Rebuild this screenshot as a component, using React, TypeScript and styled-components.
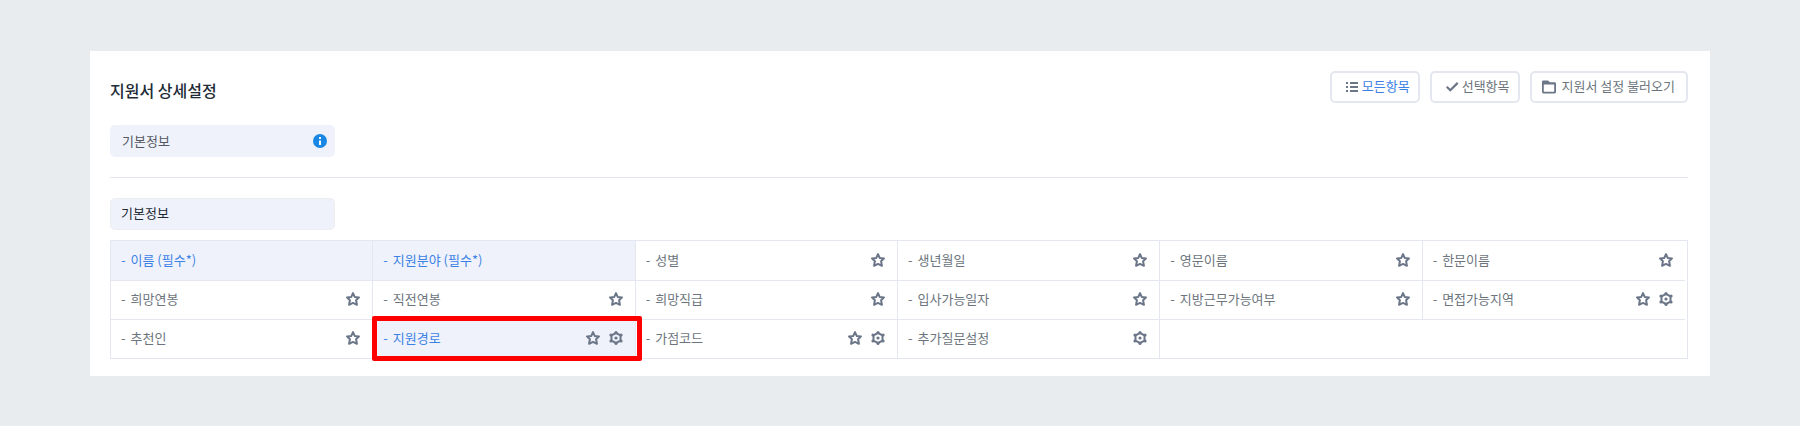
import React from "react";
import styled, { createGlobalStyle, css } from "styled-components";

const color = {
  page: "#e8ecef",
  panel: "#ffffff",
  line: "#e4e7f0",
  tint: "#eff2fa",
  text: "#6c757d",
  dark: "#54585f",
  strong: "#212b36",
  blue: "#3c82e6",
  icon: "#6b7688",
  info: "#1b87e5",
  mark: "#ff0000",
};

const GlobalStyle = createGlobalStyle`
  *, *::before, *::after { box-sizing: border-box; }
  body {
    margin: 0;
    background: ${color.page};
    color: ${color.text};
    font-family: "Noto Sans CJK KR", "Noto Sans", sans-serif;
    font-size: 13px;
    line-height: 20px;
  }
  button { font: inherit; color: inherit; cursor: pointer; }
`;

const Page = styled.div`
  padding: 51px 90px 50px;
`;

const Panel = styled.main`
  padding: 20px 22px 17px 20px;
  background: ${color.panel};
`;

const Header = styled.header`
  display: flex;
  justify-content: space-between;
  align-items: flex-start;
`;

const Title = styled.h1`
  margin: 7px 0 0;
  color: ${color.strong};
  font-size: 16px;
  font-weight: 500;
  line-height: 24px;
`;

const Toolbar = styled.div`
  display: flex;
  gap: 10px;
`;

const ToolButton = styled.button<{ $active?: boolean; $wide?: boolean }>`
  display: flex;
  align-items: center;
  gap: ${(p) => (p.$wide ? 6 : 2)}px;
  height: 32px;
  padding: ${(p) => (p.$wide ? "0 11px 2px 10px" : "0 8px 2px 14px")};
  border: 2px solid ${color.line};
  border-radius: 5px;
  background: ${color.panel};
  white-space: nowrap;
  ${(p) => p.$active && css`color: ${color.blue};`}
`;

const Icon = styled.svg`
  display: block;
  flex: none;
  width: 14px;
  height: 14px;
  color: ${color.icon};
`;

const ToolIcon = styled(Icon)`
  margin-top: 2px;
`;

const SectionBar = styled.div`
  display: flex;
  align-items: center;
  justify-content: space-between;
  width: 225px;
  height: 32px;
  margin-top: 22px;
  padding: 0 8px 1px 12px;
  border-radius: 5px;
  background: ${color.tint};
  color: ${color.dark};
`;

const SectionHeading = styled.h2`
  width: 225px;
  height: 32px;
  margin: 20px 0 10px;
  padding: 4px 10px;
  border: 1px solid #ebedf1;
  border-radius: 5px;
  background: ${color.tint};
  color: ${color.strong};
  font-size: 13px;
  font-weight: 400;
  line-height: 20px;
`;

const Divider = styled.hr`
  height: 1px;
  margin: 20px 0 0;
  border: 0;
  background: ${color.line};
`;

const FieldTable = styled.table`
  width: 100%;
  padding-right: 2px;
  table-layout: fixed;
  border-spacing: 0;
  border: 1px solid ${color.line};
`;

const Cell = styled.td<{ $selected?: boolean }>`
  position: relative;
  height: 39px;
  padding: 0;
  border-bottom: 1px solid ${color.line};
  border-right: 1px solid ${color.line};
  background: ${(p) => (p.$selected ? color.tint : color.panel)};
  color: ${(p) => (p.$selected ? color.blue : color.text)};

  tr:first-child > & { height: 40px; }
  tr:last-child > & { height: 38px; border-bottom: 0; }
  &:last-child { border-right: 0; }
`;

const CellBody = styled.div`
  display: flex;
  align-items: center;
  gap: 9px;
  padding: 0 12px 2px 10px;
`;

const FieldButton = styled.button`
  display: flex;
  flex: 1;
  gap: 5px;
  padding: 0;
  border: 0;
  background: none;
  white-space: nowrap;
`;

const IconButton = styled.button`
  padding: 0;
  border: 0;
  background: none;
`;

const Highlight = styled.div`
  position: absolute;
  inset: -4px -7px -3px -1px;
  border: 5px solid ${color.mark};
  border-radius: 2px;
  pointer-events: none;
  z-index: 1;
`;

const ListIcon = () => (
  <ToolIcon viewBox="0 0 14 14" fill="currentColor" aria-hidden="true">
    <path d="M0 2h2v2H0zM4 2h8v2H4zM0 6h2v2H0zM4 6h8v2H4zM0 10h2v2H0zM4 10h8v2H4z" />
  </ToolIcon>
);

const CheckIcon = () => (
  <ToolIcon viewBox="0 0 14 14" fill="none" stroke="currentColor" strokeWidth="2.200" aria-hidden="true">
    <path d="M.7 6.700 4.300 10.300 11.700 2.900" />
  </ToolIcon>
);

const FolderIcon = () => (
  <ToolIcon viewBox="0 0 14 14" aria-hidden="true">
    <path
      fill="currentColor"
      fillRule="evenodd"
      d="M1.400 .5H6L8 2.300h4.600A1.400 1.400 0 0 1 14 3.700v8.400a1.400 1.400 0 0 1-1.400 1.400H1.400A1.400 1.400 0 0 1 0 12.100V1.900A1.400 1.400 0 0 1 1.400 .5zM1.800 4.500v7.300h10.400V4.500z"
    />
  </ToolIcon>
);

const InfoIcon = () => (
  <Icon viewBox="0 0 14 14" aria-hidden="true">
    <circle cx="7" cy="7" r="7" fill={color.info} />
    <path d="M6 3h2v2H6zM6 6.500h2V11H6z" fill="#fff" />
  </Icon>
);

const StarIcon = () => (
  <Icon viewBox="0 0 14 14" fill="none" stroke="currentColor" strokeWidth="2" strokeLinejoin="round" aria-hidden="true">
    <path d="M7 1.100 8.700 4.900 13 5.400 10.100 8.300 10.900 12.800 7 10.900 3.100 12.800 3.900 8.300 1 5.400 5.300 4.900z" />
  </Icon>
);

const GearIcon = () => (
  <Icon viewBox="0 0 14 14" fill="currentColor" aria-hidden="true">
    <path d="M7 2 11.500 4.300V9.700L7 12 2.500 9.700V4.300z" fill="none" stroke="currentColor" strokeWidth="2" strokeLinejoin="round" />
    <circle cx="7" cy="7" r="1.600" />
    <circle cx="7" cy="1.500" r="1.500" />
    <circle cx="7" cy="12.500" r="1.500" />
    <circle cx="1.900" cy="3.900" r="1.500" />
    <circle cx="12.100" cy="3.900" r="1.500" />
    <circle cx="1.900" cy="10.100" r="1.500" />
    <circle cx="12.100" cy="10.100" r="1.500" />
  </Icon>
);

type Field = {
  name: string;
  selected?: boolean;
  star?: boolean;
  gear?: boolean;
  marked?: boolean;
};

const rows: Field[][] = [
  [
    { name: "이름 (필수*)", selected: true },
    { name: "지원분야 (필수*)", selected: true },
    { name: "성별", star: true },
    { name: "생년월일", star: true },
    { name: "영문이름", star: true },
    { name: "한문이름", star: true },
  ],
  [
    { name: "희망연봉", star: true },
    { name: "직전연봉", star: true },
    { name: "희망직급", star: true },
    { name: "입사가능일자", star: true },
    { name: "지방근무가능여부", star: true },
    { name: "면접가능지역", star: true, gear: true },
  ],
  [
    { name: "추천인", star: true },
    { name: "지원경로", selected: true, star: true, gear: true, marked: true },
    { name: "가점코드", star: true, gear: true },
    { name: "추가질문설정", gear: true },
  ],
];

const COLUMNS = 6;

const FieldCell = ({ field }: { field: Field }) => (
  <Cell $selected={field.selected}>
    <CellBody>
      <FieldButton type="button" aria-pressed={!!field.selected}>
        <span>-</span>
        <span>{field.name}</span>
      </FieldButton>
      {field.star && (
        <IconButton type="button" aria-label={`${field.name} 필수`}>
          <StarIcon />
        </IconButton>
      )}
      {field.gear && (
        <IconButton type="button" aria-label={`${field.name} 설정`}>
          <GearIcon />
        </IconButton>
      )}
    </CellBody>
    {field.marked && <Highlight />}
  </Cell>
);

export default function App() {
  return (
    <Page>
      <GlobalStyle />
      <Panel>
        <Header>
          <Title>지원서 상세설정</Title>
          <Toolbar>
            <ToolButton type="button" $active>
              <ListIcon />
              모든항목
            </ToolButton>
            <ToolButton type="button">
              <CheckIcon />
              선택항목
            </ToolButton>
            <ToolButton type="button" $wide>
              <FolderIcon />
              지원서 설정 불러오기
            </ToolButton>
          </Toolbar>
        </Header>
        <SectionBar>
          <span>기본정보</span>
          <IconButton type="button" aria-label="기본정보 안내">
            <InfoIcon />
          </IconButton>
        </SectionBar>
        <Divider />
        <SectionHeading>기본정보</SectionHeading>
        <FieldTable>
          <tbody>
            {rows.map((row, i) => (
              <tr key={i}>
                {row.map((field) => (
                  <FieldCell key={field.name} field={field} />
                ))}
                {row.length < COLUMNS && <Cell colSpan={COLUMNS - row.length} />}
              </tr>
            ))}
          </tbody>
        </FieldTable>
      </Panel>
    </Page>
  );
}
